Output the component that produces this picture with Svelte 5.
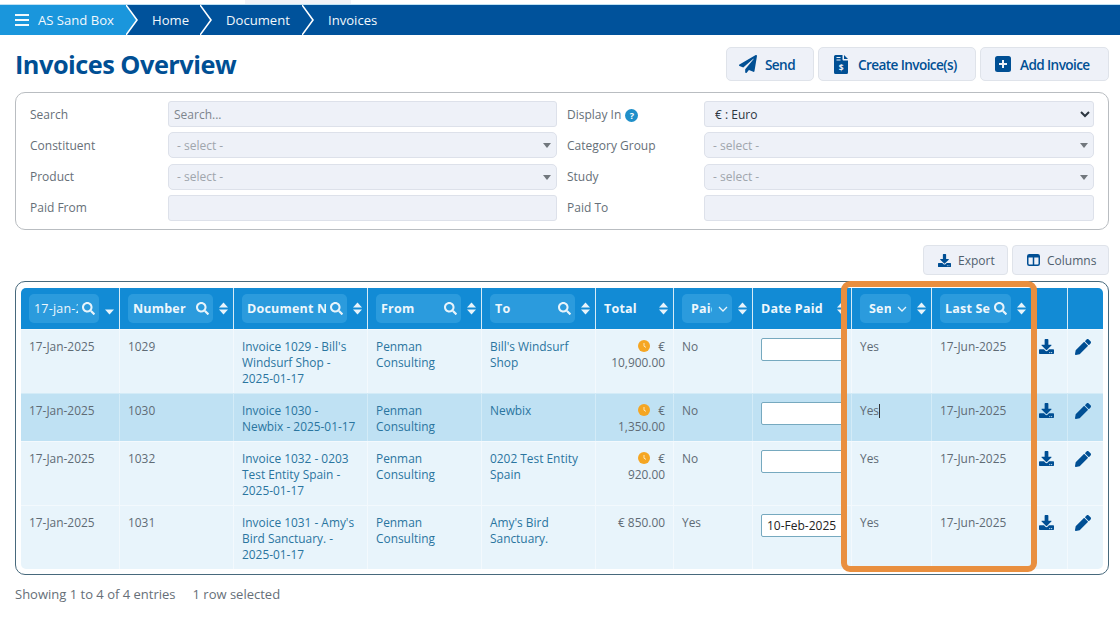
<script>
  const search = "M505 442.7L405.3 343c-4.5-4.5-10.6-7-17-7H372c27.6-35.3 44-79.7 44-128C416 93.1 322.9 0 208 0S0 93.1 0 208s93.1 208 208 208c48.3 0 92.7-16.4 128-44v16.3c0 6.4 2.5 12.5 7 17l99.7 99.7c9.4 9.4 24.6 9.4 33.9 0l28.3-28.3c9.4-9.4 9.4-24.6.1-34zM208 336c-70.7 0-128-57.2-128-128 0-70.7 57.2-128 128-128 70.7 0 128 57.2 128 128 0 70.7-57.2 128-128 128z";
  const download = "M216 0h80c13.3 0 24 10.7 24 24v168h87.7c17.8 0 26.7 21.5 14.1 34.1L269.7 378.3c-7.5 7.5-19.8 7.5-27.3 0L90.1 226.1c-12.6-12.6-3.7-34.1 14.1-34.1H192V24c0-13.3 10.7-24 24-24zm296 376v112c0 13.3-10.7 24-24 24H24c-13.3 0-24-10.7-24-24V376c0-13.3 10.7-24 24-24h146.7l49 49c20.1 20.1 52.5 20.1 72.6 0l49-49H488c13.3 0 24 10.7 24 24zm-124 88c0-11-9-20-20-20s-20 9-20 20 9 20 20 20 20-9 20-20zm64 0c0-11-9-20-20-20s-20 9-20 20 9 20 20 20 20-9 20-20z";
  const pencil = "M497.9 142.1l-46.1 46.1c-4.7 4.7-12.3 4.7-17 0l-111-111c-4.7-4.7-4.7-12.3 0-17l46.1-46.1c18.7-18.7 49.1-18.7 67.9 0l60.1 60.1c18.8 18.7 18.8 49.1 0 67.9zM284.2 99.8L21.6 362.4.4 483.9c-2.9 16.4 11.4 30.6 27.8 27.8l121.5-21.3 262.6-262.6c4.7-4.7 4.7-12.3 0-17l-111-111c-4.8-4.7-12.4-4.7-17.1 0z";
  const plane = "M476 3.2L12.5 270.6c-18.1 10.4-15.8 35.6 2.2 43.2L121 358.4l287.3-253.2c5.5-4.9 13.3 2.6 8.6 8.3L176 407v80.5c0 23.6 28.5 32.9 42.5 15.8L282 426l124.6 52.2c14.2 6 30.4-2.9 33-18.2l72-432C515 7.8 493.3-6.8 476 3.2z";

  const headers = [
    { label: "17-jan-2025", kind: "search", plain: true, sort: "down" },
    { label: "Number", kind: "search" },
    { label: "Document N", kind: "search" },
    { label: "From", kind: "search" },
    { label: "To", kind: "search" },
    { label: "Total", kind: "none" },
    { label: "Paid", kind: "chev", center: true },
    { label: "Date Paid", kind: "none" },
    { label: "Sent", kind: "chev", center: true },
    { label: "Last Se", kind: "search" }
  ];

  const rows = [
    { date: "17-Jan-2025", num: "1029", doc: "Invoice 1029 - Bill's Windsurf Shop - 2025-01-17", to: "Bill's Windsurf Shop", total: "10,900.00", late: true, paid: "No", paidOn: "", sent: "Yes", last: "17-Jun-2025" },
    { date: "17-Jan-2025", num: "1030", doc: "Invoice 1030 - Newbix - 2025-01-17", to: "Newbix", total: "1,350.00", late: true, paid: "No", paidOn: "", sent: "Yes", last: "17-Jun-2025", selected: true },
    { date: "17-Jan-2025", num: "1032", doc: "Invoice 1032 - 0203 Test Entity Spain - 2025-01-17", to: "0202 Test Entity Spain", total: "920.00", late: true, paid: "No", paidOn: "", sent: "Yes", last: "17-Jun-2025" },
    { date: "17-Jan-2025", num: "1031", doc: "Invoice 1031 - Amy's Bird Sanctuary. - 2025-01-17", to: "Amy's Bird Sanctuary.", total: "850.00", late: false, paid: "Yes", paidOn: "10-Feb-2025", sent: "Yes", last: "17-Jun-2025" }
  ];
</script>

<div class="page">
  <div class="topstrip"></div>
  <nav class="crumbs">
    <div class="crumb first">
      <span class="burger"><i></i><i></i><i></i></span>
      <span>AS Sand Box</span>
      <svg class="arrow" viewBox="0 0 14 30" preserveAspectRatio="none"><path d="M0 0 L11 15 L0 30" fill="#1a96dc" stroke="#fff" stroke-width="1.6"/></svg>
    </div>
    <div class="crumb home">Home<svg class="arrow" viewBox="0 0 14 30" preserveAspectRatio="none"><path d="M0 0 L11 15 L0 30" fill="none" stroke="#fff" stroke-width="1.6"/></svg></div>
    <div class="crumb doc">Document<svg class="arrow" viewBox="0 0 14 30" preserveAspectRatio="none"><path d="M0 0 L11 15 L0 30" fill="none" stroke="#fff" stroke-width="1.6"/></svg></div>
    <div class="crumb inv">Invoices</div>
  </nav>

  <header class="head">
    <h1>Invoices Overview</h1>
    <div class="actions">
      <button class="btn send">
        <svg width="18" height="18" viewBox="0 0 512 512"><path d={plane} fill="#004f94"/></svg>Send
      </button>
      <button class="btn create">
        <svg width="14" height="19" viewBox="0 0 14 19">
          <path d="M1.5 0H8.5V4.5a1 1 0 0 0 1 1H14V17.5a1.5 1.5 0 0 1-1.5 1.5h-11A1.5 1.5 0 0 1 0 17.5V1.5A1.5 1.5 0 0 1 1.5 0z" fill="#004f94"/>
          <path d="M10 0l4 4h-4z" fill="#004f94"/>
          <path d="M2.5 2.5h4M2.5 5h4" stroke="#eef1f8" stroke-width="1.2"/>
          <text x="7" y="15.5" font-size="8.5" font-weight="700" text-anchor="middle" fill="#eef1f8" font-family="Open Sans">$</text>
        </svg>Create Invoice(s)
      </button>
      <button class="btn add">
        <svg width="16" height="16" viewBox="0 0 16 16">
          <rect width="16" height="16" rx="2.5" fill="#004f94"/>
          <path d="M8 4v8M4 8h8" stroke="#eef1f8" stroke-width="2"/>
        </svg>Add Invoice
      </button>
    </div>
  </header>

  <section class="filters">
    <label for="f-search">Search</label>
    <input id="f-search" class="field" placeholder="Search..." />
    <label for="f-display" class="right">Display In <span class="help">?</span></label>
    <select id="f-display" class="field euro"><option>€ : Euro</option></select>

    <span>Constituent</span>
    <div class="field pick">- select -<b></b></div>
    <span class="right">Category Group</span>
    <div class="field pick">- select -<b></b></div>

    <span>Product</span>
    <div class="field pick">- select -<b></b></div>
    <span class="right">Study</span>
    <div class="field pick">- select -<b></b></div>

    <label for="f-from">Paid From</label>
    <input id="f-from" class="field" />
    <label for="f-to" class="right">Paid To</label>
    <input id="f-to" class="field" />
  </section>

  <div class="tools">
    <button class="tool">
      <svg width="13" height="13" viewBox="0 0 512 512"><path d={download} fill="#004f94"/></svg>Export
    </button>
    <button class="tool">
      <svg width="13" height="12" viewBox="0 0 13 12"><rect x=".75" y=".75" width="11.5" height="10.5" rx="1.5" fill="none" stroke="#004f94" stroke-width="1.5"/><rect x="1" y="1" width="11" height="2.5" fill="#004f94"/><path d="M6.5 1v10" stroke="#004f94" stroke-width="1.5"/></svg>Columns
    </button>
  </div>

  <section class="panel">
    <table>
      <colgroup>
        <col style="width:99px"/><col style="width:114px"/><col style="width:134px"/><col style="width:114px"/><col style="width:114px"/><col style="width:78px"/><col style="width:79px"/><col style="width:99px"/><col style="width:80px"/><col style="width:100px"/><col style="width:36px"/><col style="width:35px"/>
      </colgroup>
      <thead>
        <tr>
          {#each headers as h}
            <th>
              <div class="th">
                {#if h.kind === "none"}
                  <span class="bare">{h.label}</span>
                {:else}
                  <span class="pill" class:centered={h.center}>
                    <span class="ptext" class:thin={h.plain}>{h.label}</span>
                    {#if h.kind === "search"}
                      <svg width="13" height="13" viewBox="0 0 512 512"><path d={search} fill="#e8f4fb"/></svg>
                    {:else}
                      <svg width="10" height="6" viewBox="0 0 10 6"><path d="M1 1l4 4 4-4" fill="none" stroke="#e8f4fb" stroke-width="1.3"/></svg>
                    {/if}
                  </span>
                {/if}
                <svg class="sort" width="9" height="13" viewBox="0 0 9 13">
                  {#if h.sort !== "down"}<path d="M4.5 0.5L9 5.5H0z" fill="#e8f4fb"/>{/if}
                  <path d="M4.5 12.5L9 7.5H0z" fill="#e8f4fb"/>
                </svg>
              </div>
            </th>
          {/each}
          <th></th>
          <th></th>
        </tr>
      </thead>
      <tbody>
        {#each rows as r}
          <tr class:selected={r.selected}>
            <td>{r.date}</td>
            <td>{r.num}</td>
            <td class="link">{r.doc}</td>
            <td class="link">Penman Consulting</td>
            <td class="link">{r.to}</td>
            <td class="num">
              {#if r.late}
                <svg class="clock" width="12" height="12" viewBox="0 0 12 12"><circle cx="6" cy="6" r="6" fill="#f5a623"/><path d="M6 3v3.2l2 1.2" fill="none" stroke="#fde6b8" stroke-width="1"/></svg>
              {/if}
              € {r.total}
            </td>
            <td>{r.paid}</td>
            <td class="datecell"><input class="date" value={r.paidOn} /></td>
            <td>{r.sent}{#if r.selected}<span class="caret"></span>{/if}</td>
            <td>{r.last}</td>
            <td class="ico"><svg width="15" height="15" viewBox="0 0 512 512"><path d={download} fill="#004f94"/></svg></td>
            <td class="ico"><svg width="16" height="16" viewBox="0 0 512 512"><path d={pencil} fill="#004f94"/></svg></td>
          </tr>
        {/each}
      </tbody>
    </table>
  </section>

  <footer class="foot"><span>Showing 1 to 4 of 4 entries</span><span>1 row selected</span></footer>

  <div class="highlight"></div>
</div>

<style>
  :global(body) {
    margin: 0;
    background: #fff;
  }
  .page {
    position: relative;
    width: 1120px;
    height: 637px;
    overflow: hidden;
    padding-top: 5px;
    box-sizing: border-box;
    font-family: "Open Sans", "Noto Sans", sans-serif;
    color: #5f6b75;
  }
  .topstrip {
    position: absolute;
    left: 245px;
    top: 0;
    width: 106px;
    height: 4px;
    background: #f1f2f7;
  }
  .crumbs {
    display: flex;
    height: 30px;
    background: #00529b;
    color: #f2f8fc;
    font-size: 13.1px;
    align-items: stretch;
    box-shadow: 0 -1px 0 #bfe1f3;
  }
  .crumb {
    position: relative;
    display: flex;
    align-items: center;
    box-sizing: border-box;
  }
  .first {
    width: 126px;
    padding-left: 15px;
    gap: 9px;
    background: #1a96dc;
  }
  .home { width: 74px; padding-left: 26px; }
  .doc { width: 102px; padding-left: 26px; }
  .inv { padding-left: 26px; }
  .arrow {
    position: absolute;
    left: 100%;
    top: 0;
    width: 14px;
    height: 30px;
    z-index: 1;
  }
  .burger {
    display: flex;
    flex-direction: column;
    gap: 3px;
    width: 14px;
  }
  .burger i {
    display: block;
    height: 2px;
    background: #f2f8fc;
  }
  .head {
    display: flex;
    justify-content: space-between;
    align-items: center;
    height: 34px;
    margin: 12px 11px 0 15px;
  }
  h1 {
    margin: 0;
    font-size: 25.3px;
    line-height: 36px;
    font-weight: 700;
    letter-spacing: -0.5px;
    color: #004f94;
  }
  .actions {
    display: flex;
    gap: 4px;
  }
  .btn {
    display: flex;
    align-items: center;
    justify-content: flex-start;
    height: 34px;
    box-sizing: border-box;
    background: #eef1f8;
    border: 1px solid #dfe3ea;
    border-radius: 5px;
    color: #004f94;
    font: 600 13.6px "Open Sans", sans-serif;
    letter-spacing: -0.6px;
    padding: 0;
  }
  .send { width: 88px; padding-left: 12px; gap: 8px; }
  .create { width: 158px; padding-left: 15px; gap: 10px; }
  .add { width: 129px; padding-left: 14px; gap: 9px; }
  .filters {
    display: grid;
    grid-template-columns: 138px 389px 147px 390px;
    row-gap: 5.3px;
    align-items: center;
    box-sizing: border-box;
    margin: 11px 11px 0 15px;
    height: 138px;
    padding: 8px 14px;
    border: 1px solid #b9bdc1;
    border-radius: 10px;
    font-size: 12px;
    color: #666f78;
  }
  .right {
    padding-left: 10px;
  }
  .field {
    box-sizing: border-box;
    width: 100%;
    height: 26px;
    margin: 0;
    background: #eef1f8;
    border: 1px solid #dde1ea;
    border-radius: 3px;
    font: 12px "Open Sans", sans-serif;
    padding: 0 5px;
    color: #333;
    outline: none;
  }
  .field::placeholder {
    color: #7d858d;
    opacity: 1;
  }
  .euro {
    color: #2c3640;
    padding-left: 6px;
  }
  .pick {
    position: relative;
    display: flex;
    align-items: center;
    padding-left: 8px;
    color: #a0a6ad;
    border-radius: 5px;
  }
  .pick b {
    position: absolute;
    right: 5px;
    top: 10px;
    border: 4.5px solid transparent;
    border-top: 5px solid #71777d;
    border-bottom: 0;
  }
  .help {
    display: inline-block;
    width: 13px;
    height: 13px;
    line-height: 13px;
    border-radius: 50%;
    background: #1f8fc9;
    color: #fff;
    font-size: 9px;
    font-weight: 700;
    text-align: center;
    margin-left: 1px;
    vertical-align: 0;
  }
  .tools {
    display: flex;
    justify-content: flex-end;
    gap: 4px;
    margin: 15px 11px 0 15px;
  }
  .tool {
    display: flex;
    align-items: center;
    justify-content: flex-start;
    gap: 7px;
    height: 30px;
    box-sizing: border-box;
    background: #eef1f8;
    border: 1px solid #dfe3ea;
    border-radius: 4px;
    color: #50606e;
    font: 12px "Open Sans", sans-serif;
    padding: 0 0 0 14px;
  }
  .tool:first-child { width: 85px; }
  .tool:last-child { width: 97px; }
  .panel {
    box-sizing: border-box;
    margin: 6px 11px 0 15px;
    height: 294px;
    padding: 6px 5px;
    border: 1px solid #47697c;
    border-radius: 10px;
  }
  table {
    width: 1082px;
    table-layout: fixed;
    border-collapse: separate;
    border-spacing: 0;
    font-size: 11.9px;
    line-height: 16px;
  }
  th {
    height: 41px;
    padding: 0;
    background: #128bd5;
    border-right: 1px solid #d5ebf7;
    box-sizing: border-box;
  }
  th:first-child { border-top-left-radius: 5px; }
  th:last-child { border-top-right-radius: 5px; border-right: 0; }
  .th {
    display: flex;
    align-items: center;
    justify-content: space-between;
    height: 41px;
    padding: 0 5px 0 8px;
    box-sizing: border-box;
  }
  .pill {
    display: flex;
    align-items: center;
    justify-content: space-between;
    box-sizing: border-box;
    flex: 1;
    min-width: 0;
    height: 29px;
    margin-right: 6px;
    padding: 0 4px 0 5px;
    background: #2b9bdd;
    border-radius: 5px;
    color: #eef7fc;
    font-weight: 700;
    font-size: 12.5px;
    letter-spacing: 0.2px;
    gap: 4px;
  }
  .pill.centered {
    padding-left: 9px;
    gap: 6px;
  }
  .ptext {
    flex: 1;
    min-width: 0;
    overflow: hidden;
    white-space: nowrap;
    text-align: left;
  }
  .ptext.thin { font-weight: 400; }
  .bare {
    color: #eef7fc;
    font-weight: 700;
    font-size: 12.5px;
    letter-spacing: 0.2px;
    white-space: nowrap;
  }
  .sort { flex: none; }
  td {
    height: 48px;
    box-sizing: border-box;
    padding: 8px 8px 7px;
    vertical-align: top;
    background: #e8f4fb;
    border-right: 1px solid #f3f9fd;
    border-top: 1px solid #f3f9fd;
    overflow: hidden;
    color: #5f6b75;
  }
  td:last-child { border-right: 0; }
  tr.selected td {
    background: #bfe1f3;
    border-color: #d3ebf7;
  }
  tbody tr:last-child td:first-child { border-bottom-left-radius: 5px; }
  tbody tr:last-child td:last-child { border-bottom-right-radius: 5px; }
  td.link { color: #2a759f; }
  td.num {
    text-align: right;
    padding-right: 8px;
  }
  .clock {
    vertical-align: -1px;
    margin-right: 5px;
  }
  .date {
    display: block;
    box-sizing: border-box;
    width: 84px;
    height: 23px;
    margin-top: 0;
    border: 1px solid #76a9bf;
    border-radius: 2px;
    background: #fff;
    font: 12px "Open Sans", sans-serif;
    color: #222;
    padding: 0 5px;
    outline: none;
  }
  .caret {
    display: inline-block;
    width: 1px;
    height: 14px;
    background: #333;
    vertical-align: -3px;
  }
  td.ico {
    padding: 9px 0 0 7px;
    text-align: left;
  }
  .ico svg { display: block; }
  .foot {
    display: flex;
    gap: 17px;
    margin: 11px 15px 0;
    font-size: 13px;
    line-height: 17px;
    color: #666f78;
  }
  .highlight {
    position: absolute;
    left: 841px;
    top: 281px;
    width: 196px;
    height: 291px;
    box-sizing: border-box;
    border: 6px solid #e98f3f;
    border-radius: 9px;
    pointer-events: none;
  }
</style>
